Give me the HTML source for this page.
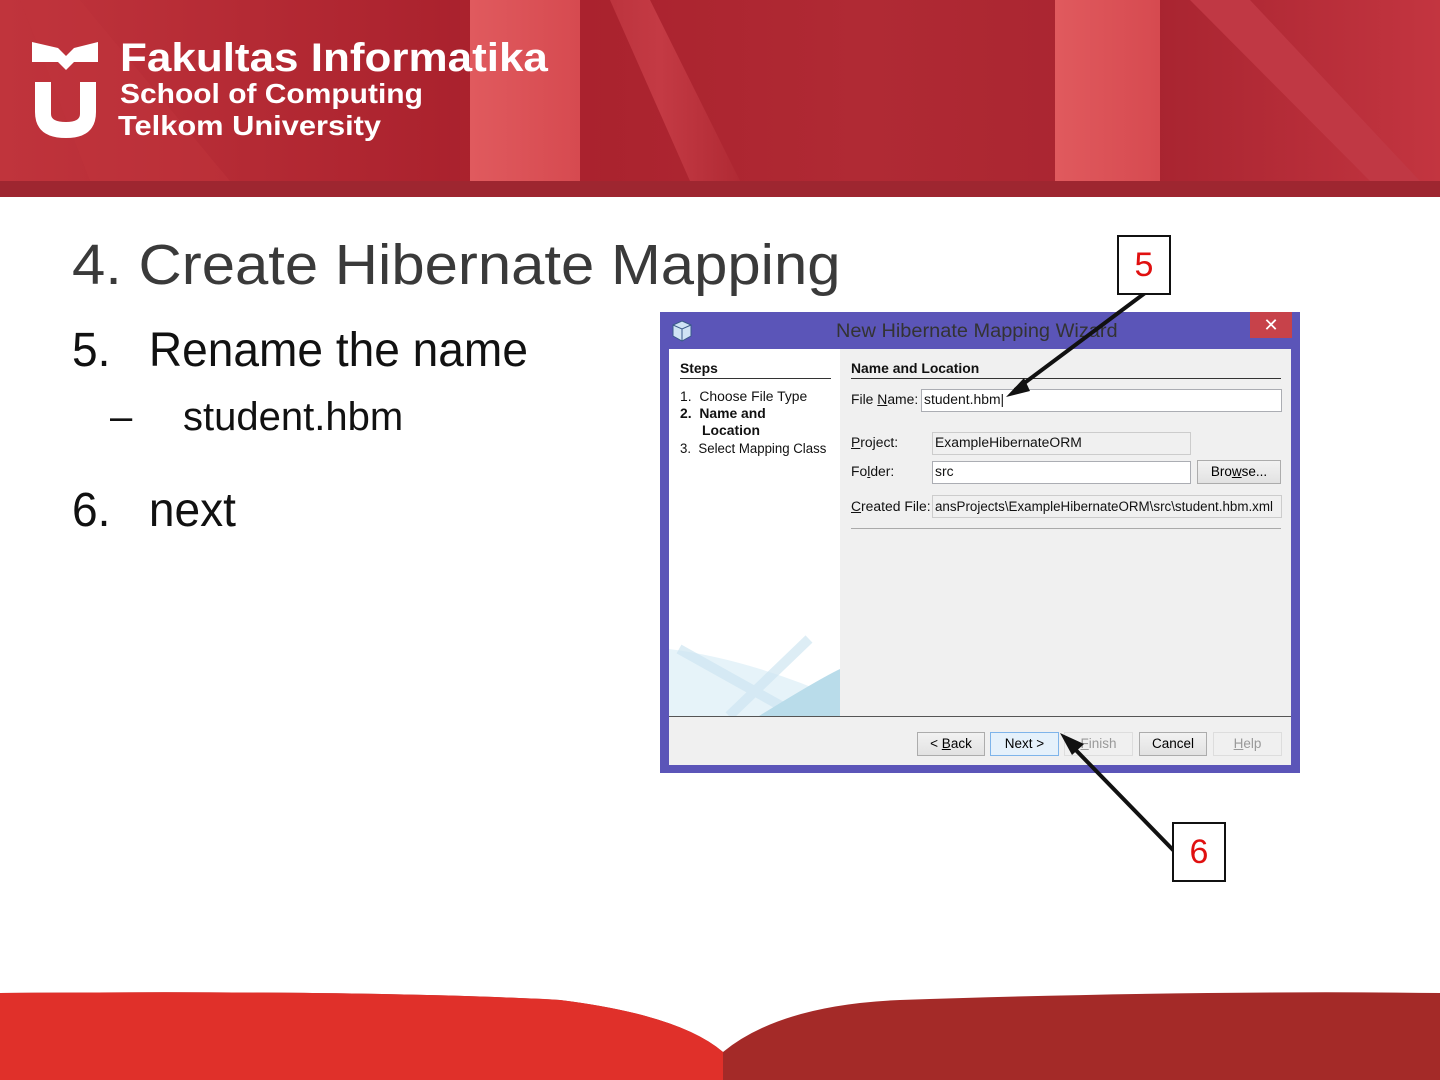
<!DOCTYPE html>
<html><head><meta charset="utf-8"><style>
*{margin:0;padding:0;box-sizing:border-box}
body{width:1440px;height:1080px;position:relative;overflow:hidden;background:#fff;font-family:"Liberation Sans",sans-serif}
.abs{position:absolute}
.hdr{left:0;top:0;width:1440px;height:181px;background:linear-gradient(90deg,#c0343c 0%,#a8202c 35%,#b02a34 60%,#a82430 80%,#c33540 100%)}
.band{left:0;top:181px;width:1440px;height:16px;background:#9e2630}
.lt{color:#fff;font-weight:bold;white-space:nowrap;transform-origin:left top}
.t{color:#3a3a3a;white-space:nowrap;transform-origin:left top}
.dlg{left:660px;top:312px;width:640px;height:461px;background:#5b55b8}
.ui{font-family:"Liberation Sans",sans-serif;font-size:13.5px;color:#111;white-space:nowrap;transform-origin:left top;transform:scaleX(1.03)}
.inp{background:#fff;border:1px solid #abadb3;height:23px}
.btn{border:1px solid #acacac;background:linear-gradient(#f2f2f2,#e2e2e2);height:24px;text-align:center;font-size:13.5px;line-height:22px}
.num{border:2px solid #111;background:#fff;color:#e01010;font-size:34px;text-align:center;line-height:56px}
</style></head><body>
<div class="abs hdr"></div>
<div class="abs" style="left:470px;top:0;width:110px;height:181px;background:linear-gradient(90deg,#e05a5e,#d64a50)"></div>
<div class="abs" style="left:580px;top:0;width:160px;height:181px;background:linear-gradient(90deg,#b8303a,#c43a44,#b02a34);clip-path:polygon(30px 0,70px 0,160px 181px,110px 181px)"></div>
<div class="abs" style="left:1055px;top:0;width:105px;height:181px;background:linear-gradient(90deg,#e05a5e,#d64a50)"></div>
<div class="abs" style="left:1190px;top:0;width:250px;height:181px;background:#c03844;clip-path:polygon(0 0,60px 0,230px 181px,180px 181px)"></div>
<div class="abs" style="left:0;top:0;width:230px;height:181px;background:#c0343c;opacity:.5;clip-path:polygon(20px 0,80px 0,230px 181px,90px 181px)"></div>
<div class="abs band"></div>
<svg class="abs" style="left:32px;top:42px" width="68" height="98" viewBox="0 0 68 98">
<path d="M0 0 L26 6 L34 14 L42 6 L66 0 L66 20 L42 20 L34 28 L26 20 L0 20Z" fill="#fff"/>
<path d="M3 40 L19 40 L19 72 Q19 80 34 80 Q48 80 48 72 L48 40 L64 40 L64 70 Q64 96 34 96 Q3 96 3 70Z" fill="#fff"/>
</svg>
<div class="abs lt" style="left:120px;top:36px;font-size:40px;transform:scaleX(1.1)">Fakultas Informatika</div>
<div class="abs lt" style="left:120px;top:78px;font-size:28px;transform:scaleX(1.07)">School of Computing</div>
<div class="abs lt" style="left:118px;top:110px;font-size:28px;transform:scaleX(1.1)">Telkom University</div>

<div class="abs t" style="left:72px;top:232px;font-size:57px;transform:scaleX(1.05)">4. Create Hibernate Mapping</div>
<div class="abs t" style="left:72px;top:323px;font-size:48px;color:#111;transform:scaleX(.96)">5.&nbsp;&nbsp;&nbsp;Rename the name</div>
<div class="abs t" style="left:110px;top:395px;font-size:40px;color:#111">–</div>
<div class="abs t" style="left:183px;top:395px;font-size:40px;color:#111">student.hbm</div>
<div class="abs t" style="left:72px;top:483px;font-size:48px;color:#111;transform:scaleX(.96)">6.&nbsp;&nbsp;&nbsp;next</div>

<div class="abs dlg"></div>
<svg class="abs" style="left:672px;top:320px" width="20" height="22"><path d="M10 1 L19 5 L19 16 L10 21 L1 16 L1 5Z" fill="#cfe3f5" stroke="#3a5a8a"/><path d="M1 5 L10 9 L19 5 M10 9 L10 21" fill="none" stroke="#3a5a8a"/></svg>
<div class="abs" style="left:836px;top:321px;font-size:19px;color:#333;transform:scaleX(1.05);transform-origin:left top;white-space:nowrap">New Hibernate Mapping Wizard</div>
<div class="abs" style="left:1250px;top:312px;width:42px;height:26px;background:#c7424a;color:#fff;text-align:center;font-size:18px;line-height:26px">✕</div>
<div class="abs" style="left:669px;top:349px;width:622px;height:416px;background:#f0f0f0"></div>
<div class="abs" style="left:669px;top:349px;width:171px;height:367px;background:#fff;overflow:hidden">
<svg width="171" height="367"><path d="M0 300 Q80 310 171 350 L171 367 L0 367Z" fill="#d6ebf5" opacity=".6"/><path d="M10 300 L130 367 M60 367 L140 290" stroke="#cfe6f2" stroke-width="10" opacity=".7"/><path d="M90 367 Q150 330 171 320 L171 367Z" fill="#b9dcea"/></svg></div>
<div class="abs ui" style="left:680px;top:361px;font-weight:bold">Steps</div>
<div class="abs" style="left:680px;top:378px;width:151px;height:1px;background:#333"></div>
<div class="abs ui" style="left:680px;top:389px">1.&nbsp;&nbsp;Choose File Type</div>
<div class="abs ui" style="left:680px;top:406px;font-weight:bold">2.&nbsp;&nbsp;Name and</div>
<div class="abs ui" style="left:702px;top:423px;font-weight:bold">Location</div>
<div class="abs ui" style="left:680px;top:441px;transform:scaleX(.98)">3.&nbsp;&nbsp;Select Mapping Class</div>
<div class="abs ui" style="left:851px;top:361px;font-weight:bold">Name and Location</div>
<div class="abs" style="left:851px;top:378px;width:430px;height:1px;background:#333"></div>
<div class="abs ui" style="left:851px;top:392px">File <u>N</u>ame:</div>
<div class="abs inp" style="left:921px;top:389px;width:361px"></div>
<div class="abs ui" style="left:924px;top:392px">student.hbm|</div>
<div class="abs ui" style="left:851px;top:435px"><u>P</u>roject:</div>
<div class="abs inp" style="left:932px;top:432px;width:259px;background:#f0f0f0;border-color:#ccc"></div>
<div class="abs ui" style="left:935px;top:435px">ExampleHibernateORM</div>
<div class="abs ui" style="left:851px;top:464px">Fo<u>l</u>der:</div>
<div class="abs inp" style="left:932px;top:461px;width:259px"></div>
<div class="abs ui" style="left:935px;top:464px">src</div>
<div class="abs btn" style="left:1197px;top:460px;width:84px">Bro<u>w</u>se...</div>
<div class="abs ui" style="left:851px;top:499px"><u>C</u>reated File:</div>
<div class="abs inp" style="left:932px;top:495px;width:350px;background:#f0f0f0;border-color:#ccc"></div>
<div class="abs ui" style="left:935px;top:499px;transform:scaleX(.99)">ansProjects\ExampleHibernateORM\src\student.hbm.xml</div>
<div class="abs" style="left:851px;top:528px;width:430px;height:1px;background:#aaa"></div>
<div class="abs" style="left:669px;top:716px;width:622px;height:1px;background:#555"></div>
<div class="abs btn" style="left:917px;top:732px;width:68px">&lt; <u>B</u>ack</div>
<div class="abs btn" style="left:990px;top:732px;width:69px;background:#e5f1fb;border-color:#7eb4ea">Next &gt;</div>
<div class="abs btn" style="left:1064px;top:732px;width:69px;color:#999;background:#f0f0f0;border-color:#ddd"><u>F</u>inish</div>
<div class="abs btn" style="left:1139px;top:732px;width:68px">Cancel</div>
<div class="abs btn" style="left:1213px;top:732px;width:69px;color:#999;background:#f0f0f0;border-color:#ddd"><u>H</u>elp</div>

<svg class="abs" style="left:0;top:0" width="1440" height="1080">
<line x1="1145" y1="293" x2="1015" y2="390" stroke="#111" stroke-width="4"/>
<path d="M1006 397 L1024 378 L1030 391Z" fill="#111"/>
<line x1="1175" y1="852" x2="1068" y2="742" stroke="#111" stroke-width="4"/>
<path d="M1060 733 L1084 744 L1072 755Z" fill="#111"/>
<path d="M0 993 Q380 990 560 1000 Q680 1015 723 1052 Q780 1005 900 1000 Q1200 990 1440 993 L1440 1080 L723 1080 Z" fill="#a42a28"/>
<path d="M0 993 Q380 990 560 1000 Q680 1015 723 1052 L723 1080 L0 1080Z" fill="#e0302a"/>
</svg>
<div class="abs num" style="left:1117px;top:235px;width:54px;height:60px">5</div>
<div class="abs num" style="left:1172px;top:822px;width:54px;height:60px">6</div>
</body></html>
